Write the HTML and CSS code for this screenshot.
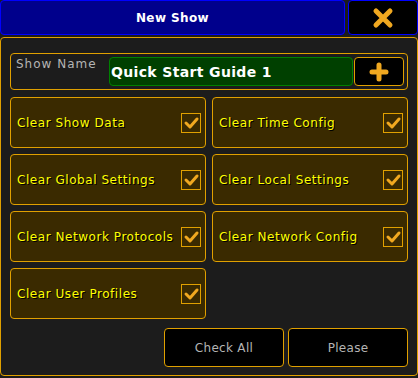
FILE: index.html
```html
<!DOCTYPE html>
<html lang="en">
<head>
  <meta charset="UTF-8" />
  <title>New Show</title>
  <link rel="stylesheet" href="styles.css">
</head>
<body>
  <div class="topbar">
    <div class="title">New Show</div>
    <div class="close">
      <svg width="22" height="22" viewBox="0 0 22 22"><path d="M4 4 L18 18 M18 4 L4 18" stroke="#f0a820" stroke-width="5" stroke-linecap="round"/></svg>
    </div>
  </div>

  <div class="panel">
    <div class="name-row">
      <div class="name-label">Show Name</div>
      <div class="name-input">Quick Start Guide 1</div>
      <div class="plus">
        <svg width="20" height="20" viewBox="0 0 20 20"><path d="M10 3 V17 M3 10 H17" stroke="#f0a820" stroke-width="5" stroke-linecap="round"/></svg>
      </div>
    </div>

    <div class="options">
      <div class="opt"><span>Clear Show Data</span><i class="box"></i></div>
      <div class="opt"><span>Clear Time Config</span><i class="box"></i></div>
      <div class="opt"><span>Clear Global Settings</span><i class="box"></i></div>
      <div class="opt"><span>Clear Local Settings</span><i class="box"></i></div>
      <div class="opt"><span>Clear Network Protocols</span><i class="box"></i></div>
      <div class="opt"><span>Clear Network Config</span><i class="box"></i></div>
      <div class="opt"><span>Clear User Profiles</span><i class="box"></i></div>
    </div>

    <div class="actions">
      <button>Check All</button>
      <button>Please</button>
    </div>
  </div>

  <script>
    // put the check mark into every box
    var check = '<svg width="18" height="18" viewBox="0 0 18 18"><path d="M4 9 L8 13 L15 5" fill="none" stroke="#f0a820" stroke-width="3" stroke-linecap="round" stroke-linejoin="round"/></svg>';
    document.querySelectorAll(".box").forEach(function (b) {
      b.innerHTML = check;
    });
  </script>
</body>
</html>
```

FILE: styles.css
```css
body {
  margin: 0;
  width: 418px;
  height: 378px;
  background: #1c1c1c;
  font-family: "DejaVu Sans", sans-serif;
  overflow: hidden;
}
.topbar {
  display: flex;
  gap: 3px;
  height: 35px;
}
.title {
  width: 343px;
  background: #00008c;
  border: 1px solid #0000ff;
  border-radius: 4px;
  color: white;
  font-weight: bold;
  font-size: 12px;
  letter-spacing: 0.4px;
  display: flex;
  align-items: center;
  justify-content: center;
}
.close {
  flex: 1;
  background: #000;
  border: 1px solid #0000ff;
  border-radius: 4px;
  display: flex;
  align-items: center;
  justify-content: center;
}
.panel {
  margin-top: 2px;
  height: 339px;
  box-sizing: border-box;
  border: 1px solid #e0a000;
  border-radius: 4px;
  padding: 15px 9px 0 9px;
}
.name-row {
  display: flex;
  height: 37px;
  box-sizing: border-box;
  border: 1px solid #e0a000;
  border-radius: 4px;
  padding: 3px 3px 3px 0;
}
.name-label {
  width: 93px;
  padding-left: 5px;
  color: #b4b4b4;
  font-size: 12px;
  letter-spacing: 1px;
}
.name-input {
  flex: 1;
  background: #004000;
  border: 1px solid #008000;
  border-radius: 4px;
  color: white;
  font-weight: bold;
  font-size: 14px;
  letter-spacing: 0.35px;
  display: flex;
  align-items: center;
  padding-left: 1px;
}
.plus {
  width: 48px;
  margin-left: 1px;
  background: #000;
  border: 1px solid #e0a000;
  border-radius: 4px;
  display: flex;
  align-items: center;
  justify-content: center;
}
.options {
  margin-top: 7px;
  display: grid;
  grid-template-columns: 196px 196px;
  grid-auto-rows: 51px;
  gap: 6px;
}
.opt {
  background: #3a2a00;
  border: 1px solid #e0a000;
  border-radius: 4px;
  display: flex;
  align-items: center;
  justify-content: space-between;
  padding: 0 4px 0 6px;
  color: #ffff00;
  font-size: 12px;
  letter-spacing: 0.55px;
  text-shadow: 1px 1px 0 #000;
}
.box {
  width: 18px;
  height: 18px;
  border: 1px solid #e0a000;
  display: flex;
  align-items: center;
  justify-content: center;
}
.actions {
  margin-top: 9px;
  display: flex;
  justify-content: flex-end;
  gap: 4px;
}
.actions button {
  width: 120px;
  height: 39px;
  background: #000;
  border: 1px solid #e0a000;
  border-radius: 4px;
  color: #b4b4b4;
  font-family: "DejaVu Sans", sans-serif;
  font-size: 12px;
  letter-spacing: 0.3px;
}
```
